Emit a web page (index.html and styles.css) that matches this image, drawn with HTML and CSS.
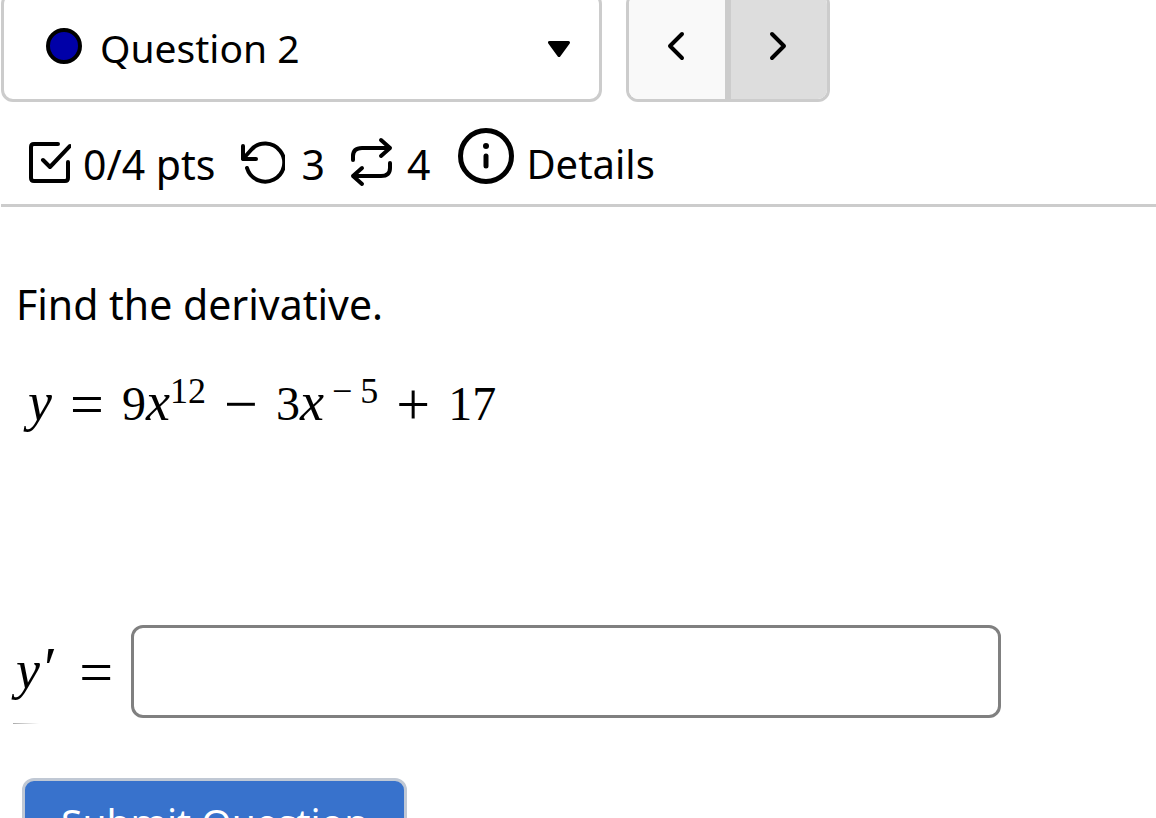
FILE: index.html
```html
<!DOCTYPE html>
<html lang="en">
<head>
<meta charset="utf-8">
<meta name="viewport" content="width=device-width, initial-scale=1">
<title>Question 2</title>
<link rel="stylesheet" href="styles.css">
</head>
<body>
<header class="toolbar">
  <div class="picker">
    <svg class="picker-dot" viewBox="0 0 36 36" aria-hidden="true"><circle cx="18" cy="18" r="16" fill="#0000a8" stroke="#000" stroke-width="4"/></svg>
    <select class="picker-select" aria-label="Question"><option>Question 2</option></select>
    <svg class="picker-caret" viewBox="0 0 22 16" aria-hidden="true"><path d="M1.500 1.500h19L11 14.500z" stroke="#000" stroke-width="3" stroke-linejoin="round"/></svg>
  </div>
  <nav class="pager" aria-label="Questions">
    <button class="pager-button" aria-label="Previous"><svg class="chevron" viewBox="0 0 18 30" aria-hidden="true"><path d="M15 3L3 15l12 12"/></svg></button>
    <button class="pager-button pager-next" aria-label="Next"><svg class="chevron" viewBox="0 0 18 30" aria-hidden="true"><path d="M3 3l12 12L3 27"/></svg></button>
  </nav>
</header>
<div class="info">
  <span class="stat score"><svg class="icon" viewBox="0 0 44 44" aria-hidden="true"><path d="M31 4H7Q4 4 4 7v31q0 3 3 3h31q3 0 3-3V22M16 20l7 7L43 6"/></svg>0/4 pts</span>
  <span class="stat tries"><svg class="icon wide" viewBox="0 0 46 44" aria-hidden="true"><path d="M4 6v13h13M4 19L12 10A19 19 0 1 1 8 28"/></svg>3</span>
  <span class="stat versions"><svg class="icon" viewBox="0 0 44 50" aria-hidden="true"><path d="M4 23v-4q0-8 9-8h28M32 3l9 8-9 8M41 26v5q0 8-9 8H4M13 31l-9 8 9 8"/></svg>4</span>
  <button class="stat details"><svg class="info-icon" viewBox="0 0 56 56" aria-hidden="true"><circle cx="28" cy="28" r="25.500"/><path d="M28 28v10"/><circle class="info-point" cx="28" cy="18" r="3"/></svg>Details</button>
</div>
<main class="question">
  <p class="prompt">Find the derivative.</p>
  <p class="math formula"><i>y</i><span class="op">=</span>9<i>x</i><sup>12</sup><span class="op">−</span>3<i>x</i><sup class="power"><span class="sign">−</span>5</sup><span class="op">+</span>17</p>
  <div class="answer">
    <label class="math" for="answer"><i>y</i><span class="prime">′</span><span class="op">=</span></label>
    <input class="answer-box" id="answer" type="text">
  </div>
  <div class="trace"></div>
  <button class="submit">Submit Question</button>
</main>
</body>
</html>
```
FILE: styles.css
```css
* { box-sizing: border-box; }
html { overflow: hidden; }
body { margin: 0; background: #fff; color: #000; font: 41px/48px "Noto Sans", sans-serif; }
button, select, input { font: inherit; color: inherit; }
svg { fill: none; stroke-linecap: round; stroke-linejoin: round; flex: none; }
.toolbar { display: flex; gap: 24px; margin-top: -8px; padding-left: 1px; }
.picker { position: relative; width: 52%; height: 110px; }
.picker-select { width: 100%; height: 100%; padding: 2px 80px 0 96px; border: 3px solid #ccc; border-radius: 12px; background: #fff; font-size: 39px; appearance: none; }
.picker-dot { position: absolute; left: 45px; top: 36px; width: 36px; }
.picker-caret { position: absolute; right: 32px; top: 49px; width: 22px; fill: #000; pointer-events: none; }
.pager { display: flex; width: 204px; border: 3px solid #ccc; border-radius: 12px; overflow: hidden; }
.pager-button { flex: 1; display: grid; place-items: center; padding: 0 2px 2px 0; border: 0; background: #f9f9f9; }
.pager-next { background: #ddd; border-left: 6px solid #ccc; }
.chevron { width: 18px; stroke: #000; stroke-width: 4; }
.info { display: flex; align-items: center; height: 105px; margin-left: 1px; padding: 22px 0 0 26px; border-bottom: 3px solid #ccc; }
.stat { display: flex; align-items: center; gap: 12px; }
.stat .icon { margin-bottom: 4px; }
.icon { width: 44px; stroke: #000; stroke-width: 4; }
.stat .wide { width: 46px; }
.tries { margin-left: 24px; gap: 16px; }
.versions { margin-left: 24px; gap: 14px; }
.details { margin-left: 28px; padding: 0; border: 0; background: none; font-size: 40px; }
.info-icon { width: 56px; margin-bottom: 16px; stroke: #000; stroke-width: 5; }
.info-point { fill: #000; stroke: none; }
.question { padding: 73px 16px 0; }
.prompt { margin: 0; }
.math { font-family: "Liberation Serif", serif; font-size: 48px; line-height: 56px; white-space: nowrap; }
.math i { font-size: 54px; line-height: 0; }
.formula { margin: 48px 0 0; padding-left: 12px; }
.math sup { font-size: 36px; line-height: 0; }
.op { display: inline-block; width: 34px; margin: 0 18px; text-align: center; font-size: 60px; line-height: 0; vertical-align: -4px; }
.power .sign { margin: 0 8px; }
.prime { margin: 0 4px; font-size: 60px; line-height: 0; }
.answer { display: flex; align-items: center; margin-top: 193px; }
.answer-box { flex: none; width: 77.400%; height: 93px; padding: 0 20px; border: 3px solid #808080; border-radius: 12px; background: #fff; }
.trace { width: 26px; height: 1px; margin-top: 5px; margin-left: -3px; background: linear-gradient(90deg, #aaa, #fff); }
.submit { display: block; margin: 54px 0 0 6px; padding: 8px 36px; height: 88px; border: 3px solid #c0c8d4; border-radius: 12px; background: #3872cc; color: #fff; font-size: 39px; }
```
